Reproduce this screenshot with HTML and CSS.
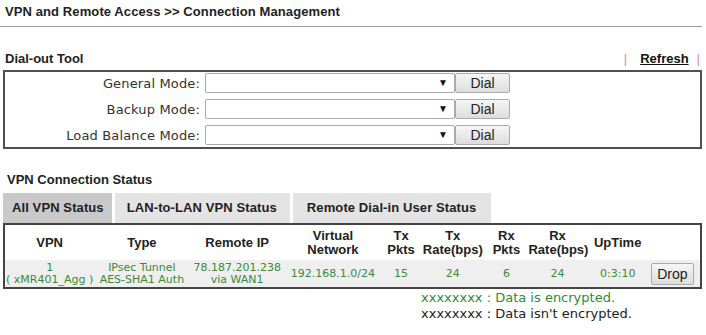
FILE: index.html
```html
<!DOCTYPE html>
<html lang="en">

<head>
  <meta charset="UTF-8">
  <meta name="viewport" content="width=device-width, initial-scale=1.0">
  <title>Connection Management</title>
  <link rel="stylesheet" href="styles.css">
</head>

<body>
  <div class="title">VPN and Remote Access &gt;&gt; Connection Management</div>

  <div class="page">
    <div class="head">
      <span>Dial-out Tool</span>
      <span class="links"><span class="sep">|</span><a href="#">Refresh</a><span class="sep sep-end">|</span></span>
    </div>

    <div class="dial-box">
      <label class="dial-label">General Mode:</label>
      <span class="select-wrap"><select></select></span>
      <button class="btn">Dial</button>

      <label class="dial-label">Backup Mode:</label>
      <span class="select-wrap"><select></select></span>
      <button class="btn">Dial</button>

      <label class="dial-label">Load Balance Mode:</label>
      <span class="select-wrap"><select></select></span>
      <button class="btn">Dial</button>
    </div>

    <div class="head status-head">VPN Connection Status</div>

    <div class="tabs">
      <div class="tab tab-active">All VPN Status</div>
      <div class="tab tab-lan">LAN-to-LAN VPN Status</div>
      <div class="tab tab-dial">Remote Dial-in User Status</div>
    </div>

    <table class="status">
      <colgroup>
        <col style="width:90px">
        <col style="width:95px">
        <col style="width:95px">
        <col style="width:96px">
        <col style="width:40px">
        <col style="width:63px">
        <col style="width:44px">
        <col style="width:58px">
        <col style="width:62px">
        <col style="width:52px">
      </colgroup>
      <tr class="head-row">
        <th>VPN</th>
        <th>Type</th>
        <th>Remote IP</th>
        <th>Virtual<br>Network</th>
        <th>Tx<br>Pkts</th>
        <th>Tx<br>Rate(bps)</th>
        <th>Rx<br>Pkts</th>
        <th>Rx<br>Rate(bps)</th>
        <th>UpTime</th>
        <th></th>
      </tr>
      <tr class="data-row">
        <td>1<br>( xMR401_Agg )</td>
        <td>IPsec Tunnel<br>AES-SHA1 Auth</td>
        <td>78.187.201.238<br>via WAN1</td>
        <td>192.168.1.0/24</td>
        <td>15</td>
        <td>24</td>
        <td>6</td>
        <td>24</td>
        <td>0:3:10</td>
        <td><button class="btn btn-drop">Drop</button></td>
      </tr>
    </table>

    <div class="legend">
      <div class="enc">xxxxxxxx : Data is encrypted.</div>
      <div>xxxxxxxx : Data isn't encrypted.</div>
    </div>
  </div>
</body>

</html>
```

FILE: styles.css
```css
html, body {
  box-sizing: border-box;
  margin: 0;
  padding: 0;
  background: #fff;
}

*,
*:before,
*:after {
  box-sizing: inherit;
}

body {
  font-family: "Liberation Sans", Arial, sans-serif;
  color: #222;
}

.title {
  width: 702px;
  height: 27px;
  padding-left: 5px;
  line-height: 24px;
  font-size: 13px;
  font-weight: bold;
  letter-spacing: 0.1px;
  border-bottom: 1px solid #9a9a9a;
}

.page {
  margin-left: 3px;
  width: 699px;
}

.head {
  display: flex;
  justify-content: space-between;
  margin-top: 23px;
  margin-bottom: 2px;
  padding-left: 2px;
  line-height: 18px;
  font-size: 13px;
  font-weight: bold;
}

.links {
  display: flex;
  align-items: center;
}

.links a {
  color: #111;
  text-decoration: underline;
  margin: 0 8px 0 13px;
}

.sep {
  color: #e4899a;
  font-weight: normal;
}

.sep-end {
  margin-right: 2px;
}

.dial-box {
  display: grid;
  grid-template-columns: 195px 255px 55px;
  row-gap: 6px;
  align-items: center;
  border: 2px solid #505050;
  padding: 1px 0 2px 0;
}

.dial-label {
  text-align: right;
  font-family: "DejaVu Sans", Verdana, sans-serif;
  font-size: 13px;
  letter-spacing: 0.15px;
  color: #333;
}

.select-wrap {
  position: relative;
  display: block;
  margin-left: 5px;
  width: 250px;
  height: 20px;
}

.select-wrap select {
  appearance: none;
  -webkit-appearance: none;
  width: 100%;
  height: 20px;
  border: 1px solid #a9a9a9;
  border-radius: 2px;
  background: #fff;
}

.select-wrap:after {
  content: "\25BC";
  position: absolute;
  right: 7px;
  top: 4px;
  font-size: 10px;
  line-height: 12px;
  color: #111;
}

.btn {
  height: 21px;
  border: 1px solid #aaa;
  border-radius: 2px;
  background: linear-gradient(#f6f6f6, #dddddd);
  font-family: "Liberation Sans", Arial, sans-serif;
  font-size: 14px;
  color: #222;
  padding: 0;
  line-height: 18px;
}

.dial-box .btn {
  width: 55px;
  height: 20px;
}

.status-head {
  margin-top: 22px;
  padding-left: 4px;
  margin-bottom: 4px;
}

.tabs {
  display: flex;
  gap: 3px;
}

.tab {
  height: 30px;
  line-height: 30px;
  background: #e4e4e4;
  font-size: 13px;
  font-weight: bold;
  letter-spacing: 0.1px;
  color: #222;
}

.tab-active {
  background: #c9c9c9;
  padding: 0 8px 0 9px;
}

.tab-lan {
  padding: 0 13px 0 12px;
}

.tab-dial {
  padding: 0 15px 0 14px;
}

.status {
  width: 699px;
  table-layout: fixed;
  border: 2px solid #444;
  border-collapse: collapse;
}

.status th,
.status td {
  padding: 0;
  text-align: center;
  white-space: nowrap;
}

.head-row th {
  height: 36px;
  font-size: 13px;
  line-height: 14px;
  color: #222;
}

.data-row td {
  height: 28px;
  background: #efefef;
  font-family: "DejaVu Sans", Verdana, sans-serif;
  font-size: 11px;
  line-height: 12px;
  color: #3a8a3a;
}

.btn-drop {
  width: 43px;
  height: 22px;
  margin-right: 4px;
}

.legend {
  padding: 1px 0 0 418px;
  font-family: "DejaVu Sans", Verdana, sans-serif;
  font-size: 13px;
  line-height: 16px;
  color: #222;
}

.enc {
  color: #2f8a3a;
}
```
